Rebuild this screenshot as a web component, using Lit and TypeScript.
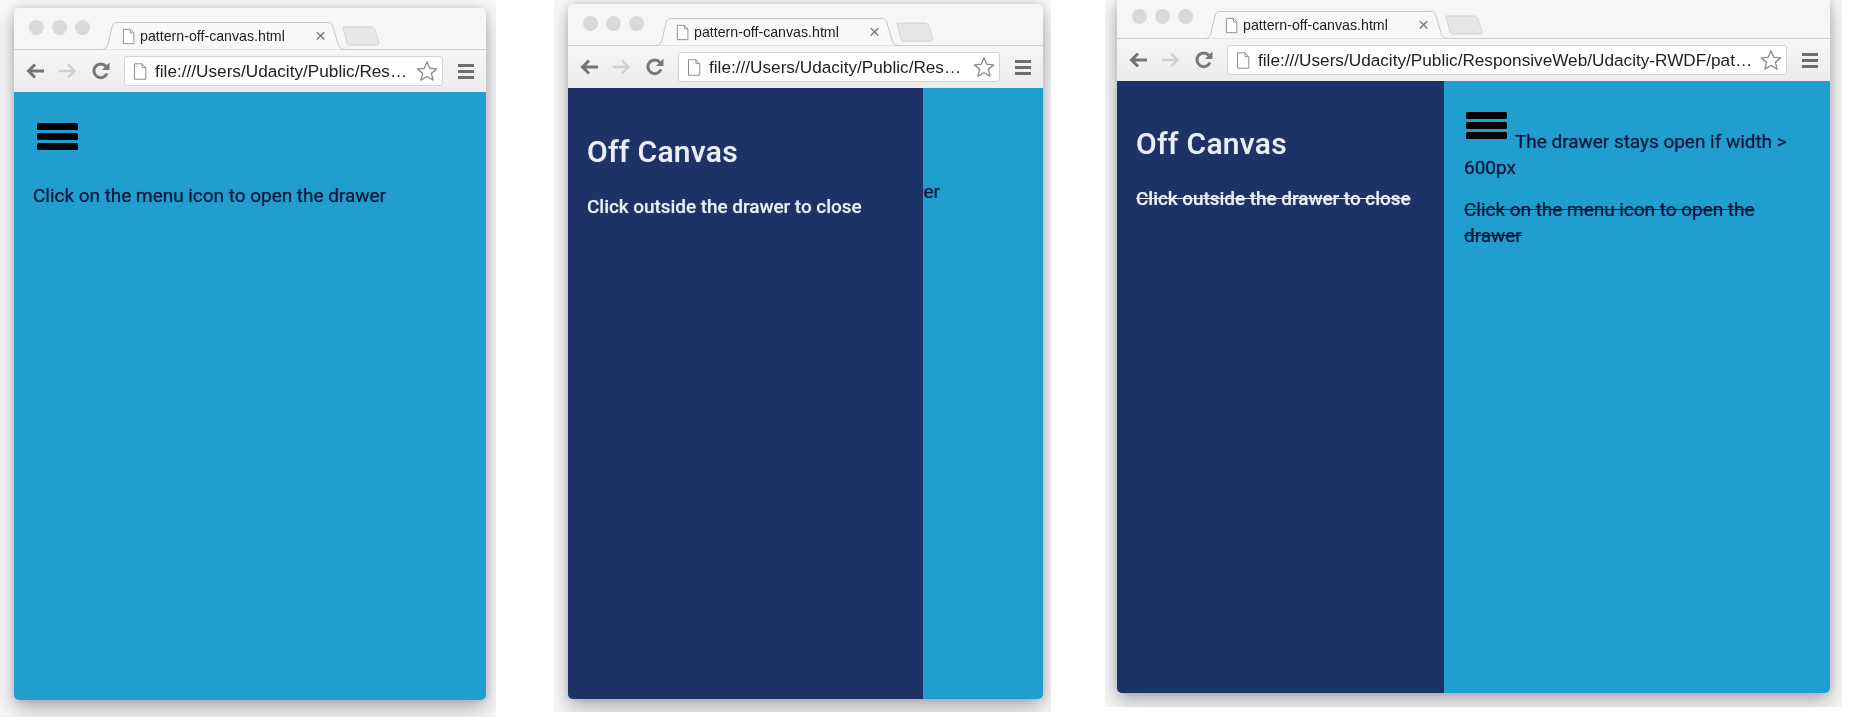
import { html, css, LitElement, svg } from "lit";
import { customElement, property } from "lit/decorators.js";

const URL_TEXT = "file:///Users/Udacity/Public/ResponsiveWeb/Udacity-RWDF/pattern-off-canvas.html";

const pageIcon = (w: number, h: number) => html`<svg class="doc" width=${w} height=${h} viewBox="0 0 14 17" fill="#fff" stroke="#8d8d8d" stroke-width="1">
  <path d="M1.5 .8H9L12.8 4.6V16.2H1.5Z" /><path d="M9 .8V4.6H12.8" fill="none" />
</svg>`;

const burger = svg`<rect x="0" y="0" width="41" height="7" rx="1.5" /><rect x="0" y="10" width="41" height="7" rx="1.5" /><rect x="0" y="20" width="41" height="7" rx="1.5" />`;

// the browser frame, page goes in the slot
@customElement("browser-window")
export class BrowserWindow extends LitElement {
  static override styles = css`
    :host {
      display: flex;
      flex-direction: column;
      border-radius: 5px;
      overflow: hidden;
      background: #f3f3f3;
      box-shadow: 0 9px 20px rgba(0, 0, 0, 0.28), 0 0 8px rgba(0, 0, 0, 0.14);
    }
    .tabstrip {
      display: flex;
      align-items: center;
      height: 42px;
      flex: none;
      padding-left: 15px;
      background: #f6f6f6;
      border-bottom: 1px solid #cfcfcf;
      box-sizing: border-box;
    }
    .dot {
      width: 15px;
      height: 15px;
      border-radius: 50%;
      background: #d9d9d9;
      margin-right: 8px;
      margin-top: -3px;
    }
    .tab {
      position: relative;
      display: flex;
      align-items: center;
      align-self: flex-end;
      flex: none;
      width: 240px;
      height: 28px;
      margin-left: 7px;
      margin-bottom: -1px;
      padding-left: 17px;
      box-sizing: border-box;
      font: 14.2px "Liberation Sans", Arial, sans-serif;
      color: #222;
    }
    .tab-bg {
      position: absolute;
      top: 0;
      left: -5px;
    }
    .tab .doc,
    .tab span {
      position: relative;
      flex: none;
    }
    .tab span.title {
      margin-left: 5px;
      width: 175px;
      white-space: nowrap;
    }
    .tab span.close {
      font-size: 19px;
      color: #777;
    }
    .newtab {
      align-self: flex-end;
      margin-left: -3px;
      margin-bottom: 3px;
    }
    .toolbar {
      display: flex;
      align-items: center;
      height: 42px;
      flex: none;
      padding: 0 12px;
      background: linear-gradient(#f6f6f6, #ececec);
      box-sizing: border-box;
    }
    .nav {
      margin-right: 15px;
      flex: none;
    }
    .nav.last {
      margin-right: 14px;
    }
    .url {
      flex: 1;
      min-width: 0;
      height: 30px;
      display: flex;
      align-items: center;
      background: #fff;
      border: 1px solid #d2d2d2;
      border-radius: 3px;
      box-sizing: border-box;
      padding: 0 4px 0 8px;
    }
    .url .doc {
      flex: none;
    }
    .url .text {
      flex: 1;
      min-width: 0;
      margin: 0 4px 0 8px;
      font: 17.2px "Liberation Sans", Arial, sans-serif;
      color: #222;
      white-space: nowrap;
      overflow: hidden;
      text-overflow: ellipsis;
    }
    .menu {
      flex: none;
      margin-left: 15px;
    }
    .page {
      flex: 1;
      min-height: 0;
      display: flex;
      flex-direction: column;
    }
    ::slotted(*) {
      flex: 1;
    }
  `;

  @property() url = URL_TEXT;

  override render() {
    return html`
      <div class="tabstrip">
        <div class="dot"></div>
        <div class="dot"></div>
        <div class="dot"></div>
        <div class="tab">
          <svg class="tab-bg" width="245" height="28" viewBox="0 0 245 28">
            <path d="M0 27.5H3C6 27.5 7 25 8 22L12 5C13 2 14 .5 18 .5H227C231 .5 232 2 233 5L238 22C239 25 240 27.5 245 27.5" fill="#f8f8f8" stroke="#c6c6c6" />
          </svg>
          ${pageIcon(13, 17)}
          <span class="title">pattern-off-canvas.html</span>
          <span class="close">×</span>
        </div>
        <svg class="newtab" width="38" height="20" viewBox="0 0 38 20">
          <path d="M1 1H29C31 1 32 2 33 4L37 17C37 18 36 19 35 19H8C6 19 5 18 5 17Z" fill="#e6e6e6" stroke="#d2d2d2" />
        </svg>
      </div>
      <div class="toolbar">
        <svg class="nav" width="18" height="16" viewBox="0 0 18 16" fill="none" stroke="#757575" stroke-width="3">
          <path d="M18 8H3M9 1.5L2.5 8L9 14.5" />
        </svg>
        <svg class="nav" width="18" height="16" viewBox="0 0 18 16" fill="none" stroke="#cfcfcf" stroke-width="2.4">
          <path d="M0 8H15M9 1.5L15.5 8L9 14.5" />
        </svg>
        <svg class="nav last" width="18" height="18" viewBox="0 0 18 18" fill="none" stroke="#777" stroke-width="3">
          <path d="M15 11.5A6.8 6.8 0 1 1 14 4.5" /><path d="M17.5 0.5V8H10Z" fill="#777" stroke="none" />
        </svg>
        <div class="url">
          ${pageIcon(14, 17)}
          <div class="text">${this.url}</div>
          <svg width="22" height="22" viewBox="0 0 24 24" fill="#fff" stroke="#8f8f8f" stroke-width="1.5" stroke-linejoin="round">
            <path d="M12 2L15 9L22.5 9.7L16.8 14.6L18.6 22L12 18L5.4 22L7.2 14.6L1.5 9.7L9 9Z" />
          </svg>
        </div>
        <svg class="menu" width="16" height="15" viewBox="0 0 16 15" fill="#6e6e6e">
          <rect width="16" height="3" /><rect y="6" width="16" height="3" /><rect y="12" width="16" height="3" />
        </svg>
      </div>
      <div class="page"><slot></slot></div>
    `;
  }
}

@customElement("app-root")
export class AppRoot extends LitElement {
  static override styles = css`
    :host {
      display: flex;
      width: 1860px;
      height: 724px;
      overflow: hidden;
      background: #fff;
      font-family: Roboto, "Liberation Sans", sans-serif;
      filter: blur(0.6px);
    }
    .plate {
      flex: none;
      overflow: hidden;
      box-sizing: border-box;
      display: flex;
      background: #f7f7f7;
    }
    .plate browser-window {
      flex: 1;
    }
    .p1 {
      width: 496px;
      height: 717px;
      padding: 8px 10px 17px 14px;
    }
    .p2 {
      width: 497px;
      height: 712px;
      margin-left: 58px;
      padding: 4px 8px 13px 14px;
    }
    .p3 {
      width: 737px;
      height: 707px;
      margin-left: 54px;
      padding: 0 12px 14px 12px;
    }
    .p3 browser-window {
      margin-top: -3px;
    }
    .blue {
      position: relative;
      background: #209ed0;
      color: #03173a;
      font-size: 19px;
      line-height: 26px;
      letter-spacing: -0.03px;
      text-shadow: 0 0 1px rgba(3, 23, 58, 0.6);
    }
    .content {
      padding: 31px 19px 0;
    }
    .burger {
      display: block;
      margin-left: 4px;
      fill: #000;
    }
    .content p {
      margin: 33px 0 0;
    }
    .drawer {
      background: #1d3367;
      color: #e9eef8;
      padding: 47px 19px 0 19px;
      box-sizing: border-box;
      text-shadow: 0 0 1px rgba(233, 238, 248, 0.5);
    }
    .over {
      position: absolute;
      inset: 0 auto 0 0;
      width: 355px;
    }
    h1 {
      margin: 0;
      font-size: 30px;
      line-height: 34px;
      font-weight: 500;
      letter-spacing: 0.3px;
    }
    .drawer p,
    .content .drawer p {
      margin: 25px 0 0;
      font-weight: 500;
      letter-spacing: -0.06px;
    }
    .split {
      display: flex;
    }
    .split .drawer {
      width: 327px;
      padding-top: 46px;
      padding-left: 19px;
    }
    .main {
      flex: 1;
      padding: 31px 20px 0 20px;
    }
    .main .burger {
      display: inline-block;
      margin: 0 8px 0 2px;
      vertical-align: 9px;
    }
    .main p {
      margin: 0;
    }
    .main p + p {
      margin-top: 16px;
    }
    .strike {
      text-decoration: line-through;
    }
  `;

  private burgerIcon() {
    return html`<svg class="burger" width="41" height="27" viewBox="0 0 41 27">${burger}</svg>`;
  }

  override render() {
    return html`
      <div class="plate p1">
        <browser-window>
          <div class="blue content">
            ${this.burgerIcon()}
            <p>Click on the menu icon to open the drawer</p>
          </div>
        </browser-window>
      </div>
      <div class="plate p2">
        <browser-window>
          <div class="blue content">
            ${this.burgerIcon()}
            <p>Click on the menu icon to open the drawer</p>
            <div class="drawer over">
              <h1>Off Canvas</h1>
              <p>Click outside the drawer to close</p>
            </div>
          </div>
        </browser-window>
      </div>
      <div class="plate p3">
        <browser-window>
          <div class="blue split">
            <div class="drawer">
              <h1>Off Canvas</h1>
              <p class="strike">Click outside the drawer to close</p>
            </div>
            <div class="main">
              <p>${this.burgerIcon()}The drawer stays open if width &gt; 600px</p>
              <p class="strike">Click on the menu icon to open the drawer</p>
            </div>
          </div>
        </browser-window>
      </div>
    `;
  }
}
